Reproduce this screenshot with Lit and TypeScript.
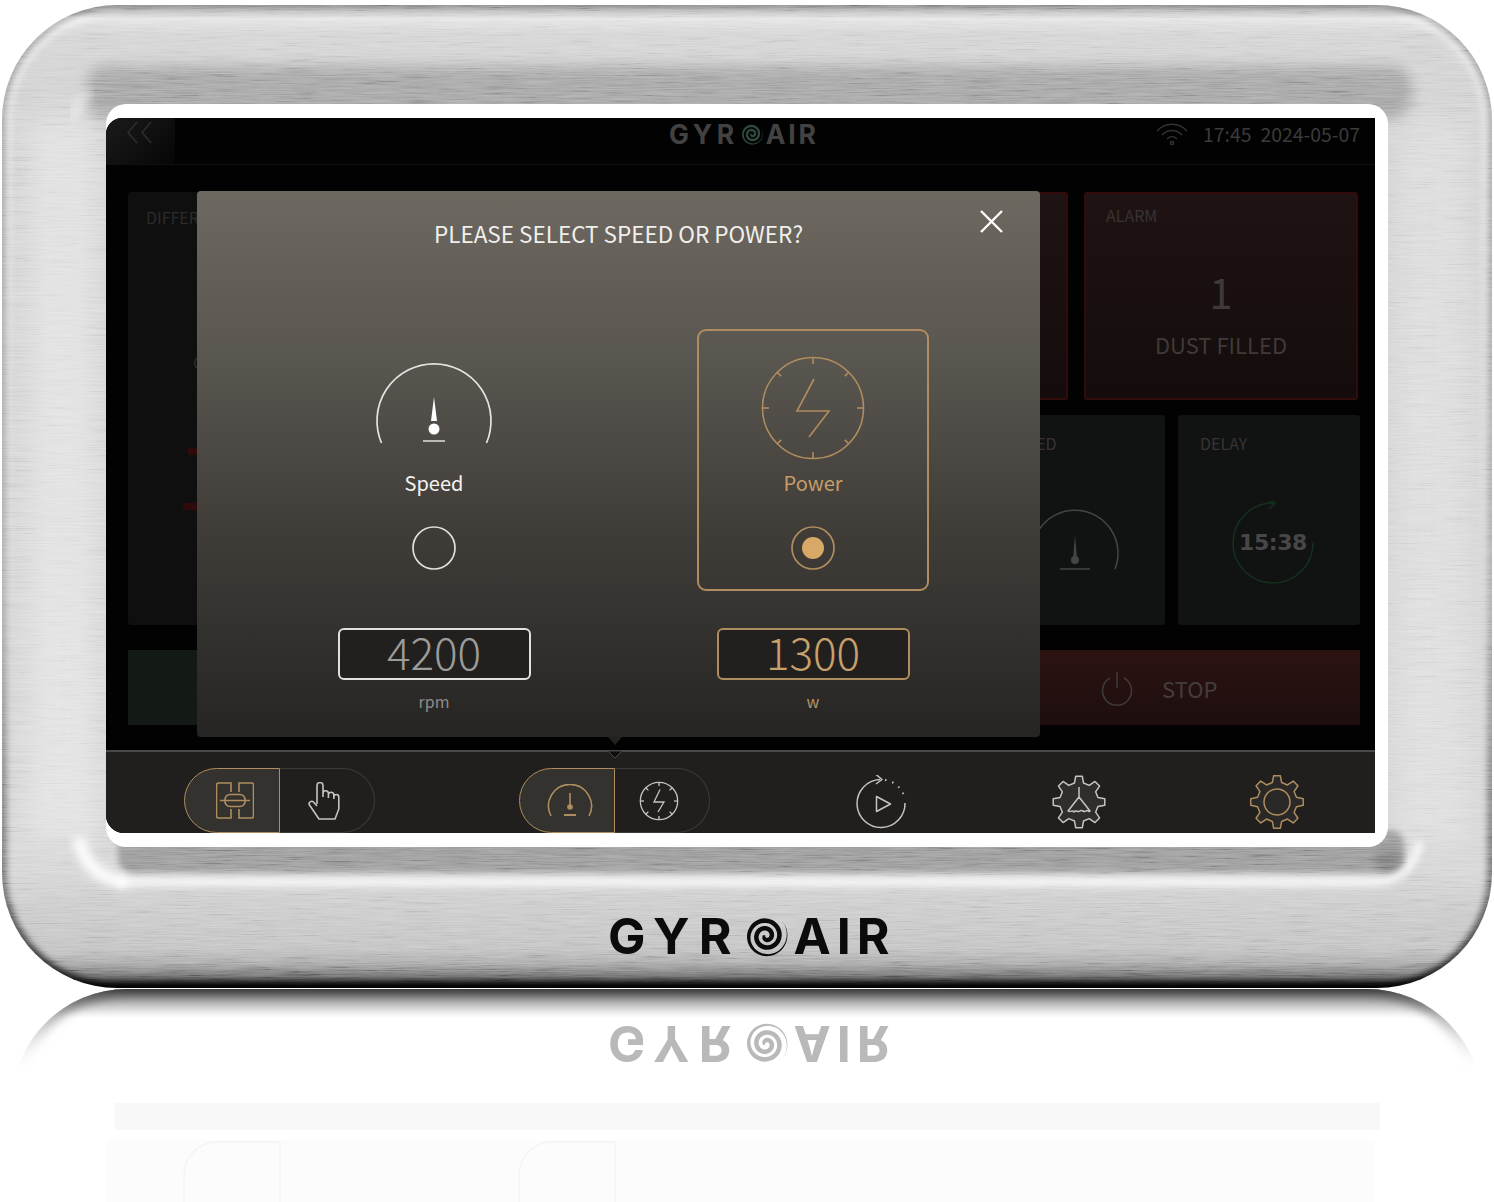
import { LitElement, html, css, svg } from "lit";
import { customElement } from "lit/decorators.js";

function gearPath(cx: number, cy: number, ro: number, rr: number, teeth: number): string {
  const pts: string[] = [];
  const step = (Math.PI * 2) / teeth;
  for (let i = 0; i < teeth; i++) {
    const a = -Math.PI / 2 + i * step;
    const list: [number, number][] = [
      [rr, a - step * 0.3],
      [ro, a - step * 0.16],
      [ro, a + step * 0.16],
      [rr, a + step * 0.3],
    ];
    for (const [r, t] of list) pts.push(`${(cx + r * Math.cos(t)).toFixed(2)} ${(cy + r * Math.sin(t)).toFixed(2)}`);
  }
  return "M" + pts.join("L") + "Z";
}

function spiralPath(c: number, R: number, turns: number, end: number, maxW: number): string {
  const outer: string[] = [];
  const inner: string[] = [];
  const n = 160;
  for (let i = 0; i <= n; i++) {
    const t = i / n;
    const r = R * (0.06 + 0.94 * t);
    const th = end + (1 - t) * turns * Math.PI * 2;
    const taper = t > 0.7 ? (1 - t) / 0.3 : 1;
    const w = (maxW * Math.min(1, t * 4 + 0.5) * taper) / 2;
    outer.push(`${(c + (r + w) * Math.cos(th)).toFixed(2)} ${(c + (r + w) * Math.sin(th)).toFixed(2)}`);
    inner.unshift(`${(c + (r - w) * Math.cos(th)).toFixed(2)} ${(c + (r - w) * Math.sin(th)).toFixed(2)}`);
  }
  return "M" + outer.concat(inner).join("L") + "Z";
}

const ticks = [0, 45, 90, 135, 180, 225, 270, 315];

@customElement("app-root")
export class AppRoot extends LitElement {
  static styles = css`
    :host {
      display: block;
      position: relative;
      width: 1494px;
      height: 1202px;
      overflow: hidden;
      background: #fff;
      font-family: "Noto Sans CJK SC", "Noto Sans", sans-serif;
    }
    .bezel { position: absolute; left: 0; top: 0; display: block; }
    .stage {
      position: relative;
      display: flex;
      flex-direction: column;
      padding: 118px 0 0 106px;
    }
    .screen {
      position: relative;
      width: 1269px;
      height: 715px;
      display: flex;
      flex-direction: column;
      background: #020202;
      border-radius: 16px 0 0 18px;
      overflow: hidden;
    }
    .topbar {
      height: 47px;
      flex: none;
      display: flex;
      align-items: center;
      border-bottom: 1px solid #101010;
      box-sizing: border-box;
      padding-bottom: 14px;
    }
    .back {
      width: 69px;
      height: 46px;
      flex: none;
      align-self: flex-start;
      background: linear-gradient(135deg, #1b1b1b, #060606);
    }
    .back svg { display: block; }
    .topmid { margin-left: 494px; }
    .status {
      margin-left: auto;
      padding-right: 15px;
      display: flex;
      align-items: center;
      gap: 15px;
      color: #3b3b3b;
      font-size: 19.4px;
      line-height: 32px;
    }
    .status .when { display: flex; gap: 9px; }
    .main {
      flex: 1;
      display: flex;
      flex-direction: column;
      padding: 27px 15px 0 22px;
      box-sizing: border-box;
    }
    .upper { display: flex; gap: 16px; height: 433px; }
    .bigcard {
      flex: 1;
      background: #0f0f0f;
      border-radius: 3px;
      padding: 14px 18px;
      box-sizing: border-box;
      color: #2b2b2b;
      font-size: 16px;
      line-height: 22px;
    }
    .bigcard .c { margin: 123px 0 0 47px; }
    .mark { height: 7px; background: #2e0a0a; border-radius: 1px; }
    .mark.a { margin: 75px 0 0 42px; width: 40px; }
    .mark.b { margin: 48px 0 0 37px; width: 45px; }
    .rcol { width: 554px; flex: none; display: flex; flex-direction: column; gap: 15px; }
    .row1 { display: flex; gap: 16px; height: 208px; }
    .row2 { display: flex; height: 210px; }
    .card { box-sizing: border-box; border-radius: 3px; padding: 17px 22px; color: #383434; font-size: 16px; line-height: 22px; background: #111212; }
    .red { border: 2px solid #330b0b; background: linear-gradient(#1f1313, #140c0c); padding: 10px 20px; }
    .w-262 { width: 262px; }
    .w-274 { width: 274px; }
    .hid { width: 164px; margin-right: 15px; }
    .sp { width: 180px; margin-right: 13px; }
    .dl { width: 182px; }
    .alarm { display: flex; flex-direction: column; }
    .alarm .one { align-self: center; font-size: 42px; line-height: 50px; margin-top: 40px; color: #3f3a3a; }
    .alarm .dust { align-self: center; font-size: 22px; line-height: 32px; margin-top: 12px; color: #403a3a; }
    .sp svg { display: block; margin: 55px 0 0 22px; }
    .dial { position: relative; width: 84px; height: 84px; margin: 47px 0 0 31px; display: flex; align-items: center; justify-content: center; }
    .dial svg { position: absolute; left: 0; top: 0; }
    .dial b { font: 700 22px/30px "DejaVu Sans", sans-serif; color: #474747; letter-spacing: -0.4px; }
    .actions { display: flex; gap: 16px; height: 75px; margin-top: 25px; }
    .start { flex: 1; background: #131a15; }
    .stop {
      width: 440px;
      flex: none;
      background: linear-gradient(#2b1312, #1e0e0e);
      display: flex;
      align-items: center;
      gap: 29px;
      padding-left: 181px;
      box-sizing: border-box;
      color: #453d3d;
      font-size: 22px;
    }
    .dock {
      height: 83px;
      flex: none;
      box-sizing: border-box;
      border-top: 2px solid #4a4947;
      background: #201f1d;
      display: flex;
      gap: 144px;
      padding: 16px 0 0 78px;
    }
    .toggle {
      width: 191px;
      height: 65px;
      flex: none;
      display: flex;
    }
    .seg {
      width: 96px;
      box-sizing: border-box;
      display: flex;
      align-items: center;
      justify-content: center;
    }
    .seg.on {
      background: #33322f;
      border: 1.5px solid #b08d5e;
      border-radius: 33px 0 0 33px;
      padding-left: 6px;
    }
    .seg.off {
      width: 95px;
      border: 1.5px solid #3c3b39;
      border-left: 0;
      border-radius: 0 33px 33px 0;
      padding-right: 6px;
    }
    .seg svg { display: block; }
    .dockicon { display: block; margin-top: 7px; flex: none; }

    .modal {
      position: absolute;
      left: 91px;
      top: 73px;
      width: 843px;
      height: 546px;
      border-radius: 4px;
      background: linear-gradient(#6d6860 0%, #5a5650 30%, #403d39 62%, #262523 100%);
      box-sizing: border-box;
      padding-top: 27px;
      display: flex;
      flex-direction: column;
    }
    .title {
      text-align: center;
      color: #f1efec;
      font-size: 22.5px;
      line-height: 30px;
    }
    .close { position: absolute; right: 36px; top: 18px; display: block; }
    .options { display: flex; gap: 147px; padding-left: 121px; margin-top: 81px; }
    .col { width: 232px; display: flex; flex-direction: column; align-items: center; }
    .opt {
      width: 232px;
      height: 262px;
      box-sizing: border-box;
      border: 2px solid transparent;
      border-radius: 9px;
      padding-top: 22px;
      display: flex;
      flex-direction: column;
      align-items: center;
      color: #f4f2ef;
    }
    .opt svg { display: block; }
    .opt.sel { border-color: #b08d5e; color: #c69d68; }
    .label { font-size: 20px; line-height: 28px; margin-top: 6px; }
    .radio { margin-top: 28px; }
    .value {
      width: 193px;
      height: 52px;
      box-sizing: border-box;
      margin-top: 37px;
      border: 2px solid #e2e0dc;
      border-radius: 6px;
      background: #21201e;
      color: #9b9b9a;
      font-size: 44px;
      font-weight: 300;
      line-height: 42px;
      text-align: center;
    }
    .value.sel { border-color: #b08d5e; color: #c8a06c; }
    .unit { margin-top: 9px; font-size: 16px; line-height: 24px; color: #8d8c8a; }
    .unit.sel { color: #b49467; }
    .notch { position: absolute; left: 394px; top: 546px; display: block; }

    .logo { display: flex; align-items: center; color: #0b0b0b; font: 700 50px/46px Inter, sans-serif; height: 46px; }
    .logo svg { display: block; flex: none; }
    .logo .gy { letter-spacing: 9px; }
    .logo .ai { letter-spacing: 6px; }
    .logo .swirl { margin: 0 5px 0 2px; }
    .logo.main-logo { margin: 80px 0 0 502px; }
    .logo.mirror { margin: 62px 0 0 502px; color: #b9b9b9; transform: scaleY(-1); }
    .logo.small { color: #424242; font-size: 26.5px; line-height: 24px; height: 24px; }
    .logo.small .gy { letter-spacing: 4.6px; }
    .logo.small .ai { letter-spacing: 2.8px; }
    .logo.small .swirl { margin: 0 2px 0 1px; }
  `;

  private logo(cls: string, size: number, fill: string) {
    return html`<div class="logo ${cls}">
      <span class="gy">GYR</span>
      <svg class="swirl" width=${size} height=${size} viewBox="0 0 46 46"><path d=${spiralPath(23, 22, 2.7, -Math.PI / 4, 4.6)} fill=${fill}></path></svg>
      <span class="ai">AIR</span>
    </div>`;
  }

  private bezel() {
    return html`<svg class="bezel" width="1494" height="1202" viewBox="0 0 1494 1202">
      <defs>
        <clipPath id="outer"><rect x="2" y="5" width="1490" height="983" rx="115"></rect></clipPath>
        <clipPath id="mirrorShape"><rect x="12" y="989" width="1470" height="400" rx="115"></rect></clipPath>
        <linearGradient id="base" gradientUnits="userSpaceOnUse" x1="0" y1="5" x2="0" y2="988">
          <stop offset="0" stop-color="#a8a8a8"></stop>
          <stop offset="0.008" stop-color="#b0b0b0"></stop>
          <stop offset="0.014" stop-color="#e4e4e4"></stop>
          <stop offset="0.03" stop-color="#d4d4d4"></stop>
          <stop offset="0.07" stop-color="#d2d2d2"></stop>
          <stop offset="0.88" stop-color="#d6d6d6"></stop>
          <stop offset="0.91" stop-color="#cdcdcd"></stop>
          <stop offset="0.96" stop-color="#c2c2c2"></stop>
          <stop offset="0.975" stop-color="#a9a9a9"></stop>
          <stop offset="0.988" stop-color="#6e6e6e"></stop>
          <stop offset="0.997" stop-color="#1a1a1a"></stop>
          <stop offset="1" stop-color="#0a0a0a"></stop>
        </linearGradient>
        <linearGradient id="edge" gradientUnits="userSpaceOnUse" x1="0" y1="5" x2="0" y2="988">
          <stop offset="0" stop-color="#000" stop-opacity="0.22"></stop>
          <stop offset="0.6" stop-color="#000" stop-opacity="0.2"></stop>
          <stop offset="0.9" stop-color="#000" stop-opacity="0.5"></stop>
          <stop offset="1" stop-color="#000" stop-opacity="0.85"></stop>
        </linearGradient>
        <linearGradient id="rimLight" gradientUnits="userSpaceOnUse" x1="0" y1="5" x2="0" y2="988">
          <stop offset="0" stop-color="#fff" stop-opacity="0.75"></stop>
          <stop offset="0.5" stop-color="#fff" stop-opacity="0.25"></stop>
          <stop offset="0.75" stop-color="#fff" stop-opacity="0"></stop>
        </linearGradient>
        <linearGradient id="mirrorBand" gradientUnits="userSpaceOnUse" x1="0" y1="989" x2="0" y2="1018">
          <stop offset="0" stop-color="#2a2a2a"></stop>
          <stop offset="0.2" stop-color="#8a8a8a"></stop>
          <stop offset="0.55" stop-color="#c4c4c4"></stop>
          <stop offset="0.85" stop-color="#f0f0f0"></stop>
          <stop offset="1" stop-color="#ffffff"></stop>
        </linearGradient>
        <linearGradient id="rim" gradientUnits="userSpaceOnUse" x1="0" y1="989" x2="0" y2="1068">
          <stop offset="0" stop-color="#444" stop-opacity="0.85"></stop>
          <stop offset="0.4" stop-color="#888" stop-opacity="0.55"></stop>
          <stop offset="1" stop-color="#ddd" stop-opacity="0"></stop>
        </linearGradient>
        <filter id="b3" x="-20%" y="-60%" width="140%" height="220%"><feGaussianBlur stdDeviation="3"></feGaussianBlur></filter>
        <filter id="b5" x="-20%" y="-60%" width="140%" height="220%"><feGaussianBlur stdDeviation="5"></feGaussianBlur></filter>
        <filter id="b7" x="-20%" y="-80%" width="140%" height="260%"><feGaussianBlur stdDeviation="7"></feGaussianBlur></filter>
        <filter id="b12" x="-60%" y="-60%" width="220%" height="220%"><feGaussianBlur stdDeviation="12"></feGaussianBlur></filter>
        <filter id="brushed" x="0" y="0" width="100%" height="100%">
          <feTurbulence type="fractalNoise" baseFrequency="0.025 0.85" numOctaves="3" seed="4"></feTurbulence>
          <feColorMatrix type="matrix" values="1.7 0 0 0 -0.35 1.7 0 0 0 -0.35 1.7 0 0 0 -0.35 0 0 0 0 1"></feColorMatrix>
        </filter>
      </defs>
      <g clip-path="url(#outer)">
        <rect x="0" y="0" width="1494" height="1000" fill="url(#base)"></rect>
        <rect x="2" y="5" width="1490" height="983" rx="115" fill="none" stroke="url(#edge)" stroke-width="9" filter="url(#b3)"></rect>
        <rect x="9" y="13" width="1476" height="967" rx="108" fill="none" stroke="url(#rimLight)" stroke-width="4" filter="url(#b3)"></rect>
        <rect x="30" y="120" width="66" height="720" fill="#fff" opacity="0.3" filter="url(#b12)"></rect>
        <rect x="1400" y="120" width="66" height="720" fill="#fff" opacity="0.2" filter="url(#b12)"></rect>
        <rect x="86" y="66" width="1326" height="52" rx="20" fill="#a5a5a5" filter="url(#b7)"></rect>
        <rect x="118" y="830" width="1286" height="43" rx="14" fill="#9a9a9a" filter="url(#b3)"></rect>
        <path d="M116 882 H1372 Q1410 882 1420 842" fill="none" stroke="#f4f4f4" stroke-width="9" filter="url(#b3)"></path>
        <path d="M128 882 Q88 880 78 838" fill="none" stroke="#fff" stroke-width="12" filter="url(#b5)"></path>
        <path d="M74 118 Q76 100 90 92" fill="none" stroke="#fff" stroke-width="10" opacity="0.4" filter="url(#b5)"></path>
        <ellipse cx="1388" cy="860" rx="14" ry="11" fill="#808080" filter="url(#b5)"></ellipse>
        <rect x="0" y="0" width="1494" height="988" filter="url(#brushed)" opacity="0.2" style="mix-blend-mode:overlay"></rect>
      </g>
      <rect x="106" y="104" width="1282" height="743" rx="20" fill="#fff"></rect>
      <g clip-path="url(#mirrorShape)">
        <rect x="0" y="989" width="1494" height="29" fill="url(#mirrorBand)"></rect>
        <rect x="12" y="989" width="1470" height="400" rx="115" fill="none" stroke="url(#rim)" stroke-width="14" filter="url(#b5)"></rect>
      </g>
      <rect x="115" y="1103" width="1265" height="27" fill="#f8f8f8"></rect>
      <rect x="106" y="1140" width="1269" height="62" fill="#fcfcfc"></rect>
      <path d="M184 1202 V1175 a33 33 0 0 1 33 -33 H280 V1202 M519 1202 V1175 a33 33 0 0 1 33 -33 H615 V1202" fill="none" stroke="#f4f4f4" stroke-width="1.5"></path>
    </svg>`;
  }

  render() {
    const gold = "#b08d5e";
    const grey = "#c4c4c2";
    return html`
      ${this.bezel()}
      <div class="stage">
        <div class="screen">
          <div class="topbar">
            <div class="back">
              <svg width="60" height="30" viewBox="0 0 60 30"><path d="M31 4 L22 14.5 L31 25 M45 4 L36 14.5 L45 25" fill="none" stroke="#2e2e2e" stroke-width="1.6"></path></svg>
            </div>
            <div class="topmid">${this.logo("small", 24, "#2f4a3c")}</div>
            <div class="status">
              <svg width="32" height="24" viewBox="0 0 32 24" fill="none" stroke="#333" stroke-width="1.5">
                <path d="M1 9 C9 0 23 0 31 9 M6 13 C11 7 21 7 26 13 M11 17 C14 14 18 14 21 17"></path>
                <circle cx="16" cy="21" r="1.6"></circle>
              </svg>
              <div class="when"><span>17:45</span><span>2024-05-07</span></div>
            </div>
          </div>
          <div class="main">
            <div class="upper">
              <div class="bigcard">
                <div>DIFFERENTIAL PRESSURE</div>
                <div class="c">CURRENT</div>
                <div class="mark a"></div>
                <div class="mark b"></div>
              </div>
              <div class="rcol">
                <div class="row1">
                  <div class="card red w-262"></div>
                  <div class="card red w-274 alarm">
                    <span>ALARM</span>
                    <span class="one">1</span>
                    <span class="dust">DUST FILLED</span>
                  </div>
                </div>
                <div class="row2">
                  <div class="card hid"></div>
                  <div class="card sp">
                    SPEED
                    <svg width="92" height="70" viewBox="0 0 92 70" fill="none" stroke="#454545" stroke-width="1.5">
                      <path d="M6 60 A43 43 0 1 1 86 60"></path>
                      <path d="M46 26 L48 50 H44 Z" fill="#454545" stroke="none"></path>
                      <circle cx="46" cy="51" r="4" fill="#454545" stroke="none"></circle>
                      <path d="M31 60 H61"></path>
                    </svg>
                  </div>
                  <div class="card dl">
                    DELAY
                    <div class="dial">
                      <svg width="84" height="84" viewBox="0 0 84 84" fill="none" stroke="#16301f" stroke-width="1.5">
                        <path d="M42 2 A40 40 0 1 0 82 42"></path>
                        <path d="M36 -1 L44 2 L38 8"></path>
                      </svg>
                      <b>15:38</b>
                    </div>
                  </div>
                </div>
              </div>
            </div>
            <div class="actions">
              <div class="start"></div>
              <div class="stop">
                <svg width="32" height="36" viewBox="0 0 32 36" fill="none" stroke="#3f3a3a" stroke-width="1.5">
                  <path d="M9 8 A14.5 14.5 0 1 0 23 8 M16 2 V18"></path>
                </svg>
                <span>STOP</span>
              </div>
            </div>
          </div>
          <div class="dock">
            <div class="toggle">
              <div class="seg on">
                <svg width="38" height="37" viewBox="0 0 38 37" fill="none" stroke=${gold} stroke-width="1.6">
                  <path d="M15 10 V1 H2.5 a2 2 0 0 0 -2 2 V34 a2 2 0 0 0 2 2 H15 V27"></path>
                  <path d="M23 10 V1 H35.5 a2 2 0 0 1 2 2 V34 a2 2 0 0 1 -2 2 H23 V27"></path>
                  <rect x="9" y="12.5" width="20" height="12" rx="5"></rect>
                  <path d="M4 18.5 H34"></path>
                </svg>
              </div>
              <div class="seg off">
                <svg width="32" height="38" viewBox="0 0 32 38" fill="none" stroke=${grey} stroke-width="1.6" stroke-linejoin="round">
                  <path d="M9 22 V3.5 a3 3 0 0 1 6 0 V15 M15 11.5 a2.7 2.7 0 0 1 5.4 0 V16 M20.4 13 a2.7 2.7 0 0 1 5.4 0 V17 M25.8 15 a2.5 2.5 0 0 1 5 0 V27 L27 37 H11 L1.5 23 c-1.6 -2.4 2 -5 4 -3 L9 24"></path>
                </svg>
              </div>
            </div>
            <div class="toggle">
              <div class="seg on">
                <svg width="46" height="34" viewBox="0 0 46 34" fill="none" stroke=${gold} stroke-width="1.6">
                  <path d="M4 32 A21.5 21.5 0 1 1 42 32"></path>
                  <path d="M23 9 V23"></path>
                  <circle cx="23" cy="23" r="2" fill=${gold}></circle>
                  <path d="M17 31 H29" stroke-width="2"></path>
                </svg>
              </div>
              <div class="seg off">
                <svg width="40" height="40" viewBox="0 0 40 40" fill="none" stroke=${grey} stroke-width="1.3">
                  <circle cx="20" cy="20" r="18.7"></circle>
                  ${ticks.map((a) => svg`<path d="M20 1.3 V5" transform="rotate(${a} 20 20)"></path>`)}
                  <path d="M21 8.5 L15 21 H25 L19 31"></path>
                </svg>
              </div>
            </div>
            <svg class="dockicon" width="54" height="54" viewBox="0 0 54 54" fill="none" stroke=${grey} stroke-width="1.5" stroke-linejoin="round">
              <path d="M26 4.5 A24 24 0 1 0 51 28"></path>
              <path d="M22 -0.5 L28 4.5 L22 9" stroke-width="1.5"></path>
              <path d="M31 5 A24 24 0 0 1 51 24" stroke-dasharray="1.5 6" stroke-width="2"></path>
              <path d="M22.5 21.5 L36.5 29 L22.5 36.5 Z"></path>
            </svg>
            <svg class="dockicon" width="54" height="54" viewBox="0 0 54 54" fill="none" stroke=${grey} stroke-width="1.5" stroke-linejoin="round">
              <path d=${gearPath(27, 27, 26, 19.5, 8)} fill="#2f2e2c"></path>
              <path d="M27 12 V22"></path>
              <path d="M27 22 L16 36 C19 38 20 34 22 37 C24 34 26 38 28 36 C30 34 32 38 34 36 C36 34 37 38 38 36 Z"></path>
            </svg>
            <svg class="dockicon" width="54" height="54" viewBox="0 0 54 54" fill="none" stroke=${gold} stroke-width="1.5" stroke-linejoin="round">
              <path d=${gearPath(27, 27, 26.5, 20, 8)} fill="#2a2927"></path>
              <circle cx="27" cy="27" r="13"></circle>
            </svg>
          </div>
          <div class="modal">
            <div class="title">PLEASE SELECT SPEED OR POWER?</div>
            <svg class="close" width="25" height="25" viewBox="0 0 25 25"><path d="M2 2 L23 23 M23 2 L2 23" stroke="#fff" stroke-width="2.4" fill="none"></path></svg>
            <div class="options">
              <div class="col">
                <div class="opt">
                  <svg width="120" height="110" viewBox="0 0 120 110" fill="none" stroke="#e6e4e0" stroke-width="1.7">
                    <path d="M7.5 90 A57 57 0 1 1 112.5 90"></path>
                    <path d="M60 44 L63 68 H57 Z" fill="#fff" stroke="none"></path>
                    <circle cx="60" cy="76" r="5.5" fill="#fff" stroke="none"></circle>
                    <path d="M49 88 H71" stroke="#bdbbb7" stroke-width="2"></path>
                  </svg>
                  <div class="label">Speed</div>
                  <svg class="radio" width="46" height="46" viewBox="0 0 46 46"><circle cx="23" cy="23" r="21" fill="none" stroke="#e2e0dc" stroke-width="1.7"></circle></svg>
                </div>
                <div class="value">4200</div>
                <div class="unit">rpm</div>
              </div>
              <div class="col">
                <div class="opt sel">
                  <svg width="120" height="110" viewBox="0 0 120 110" fill="none" stroke=${gold} stroke-width="1.6">
                    <circle cx="60" cy="55" r="50.5"></circle>
                    ${ticks.map((a) => svg`<path d="M60 4.5 V${a % 90 === 0 ? 11 : 10}" transform="rotate(${a} 60 55)"></path>`)}
                    <path d="M61 26 L44 58 H76 L56 84"></path>
                  </svg>
                  <div class="label">Power</div>
                  <svg class="radio" width="46" height="46" viewBox="0 0 46 46"><circle cx="23" cy="23" r="21" fill="none" stroke=${gold} stroke-width="1.7"></circle><circle cx="23" cy="23" r="11" fill="#d8a866"></circle></svg>
                </div>
                <div class="value sel">1300</div>
                <div class="unit sel">w</div>
              </div>
            </div>
            <svg class="notch" width="48" height="24" viewBox="0 0 48 24">
              <path d="M17 0 H31 L24 8 Z" fill="#23221f"></path>
              <path d="M17 14 L24 21 L31 14 Z" fill="#0c0c0b" stroke="#4a4947" stroke-width="1"></path>
            </svg>
          </div>
        </div>
        ${this.logo("main-logo", 46, "#0b0b0b")}
        ${this.logo("mirror", 46, "#b9b9b9")}
      </div>
    `;
  }
}
